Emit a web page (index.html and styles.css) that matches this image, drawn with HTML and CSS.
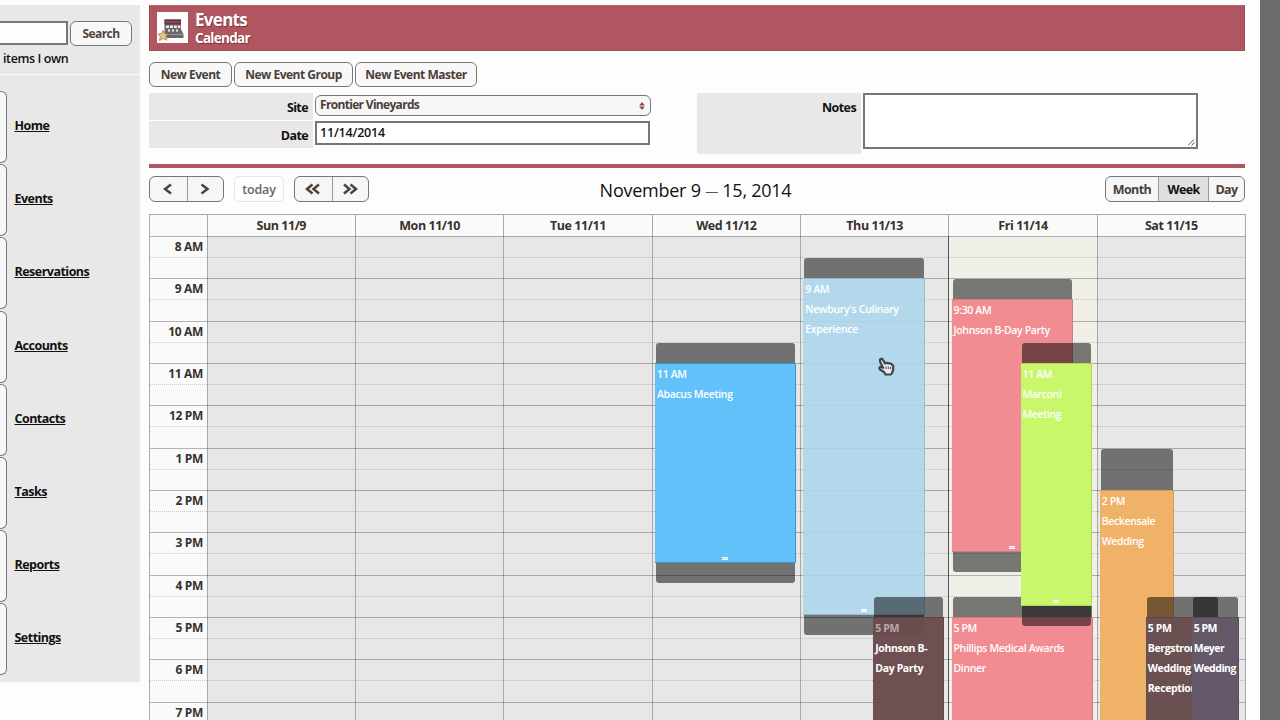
FILE: index.html
```html
<!DOCTYPE html>
<html lang="en">
<head>
    <meta charset="UTF-8">
    <meta name="viewport" content="width=device-width, initial-scale=1.0">
    <title>Events | Calendar</title>
    <link rel="stylesheet" href="styles.css">
</head>
<body>
    <div class="page">
        <!-- Sidebar -->
        <aside class="sidebar">
            <div class="search">
                <div class="search-row">
                    <input type="text" class="search-input" aria-label="Search">
                    <button class="btn search-btn">Search</button>
                </div>
                <div class="search-option">items I own</div>
            </div>
            <nav class="side-nav">
                <div class="nav-item"><span class="nav-icon"></span><a href="#">Home</a></div>
                <div class="nav-item"><span class="nav-icon"></span><a href="#">Events</a></div>
                <div class="nav-item"><span class="nav-icon"></span><a href="#">Reservations</a></div>
                <div class="nav-item"><span class="nav-icon"></span><a href="#">Accounts</a></div>
                <div class="nav-item"><span class="nav-icon"></span><a href="#">Contacts</a></div>
                <div class="nav-item"><span class="nav-icon"></span><a href="#">Tasks</a></div>
                <div class="nav-item"><span class="nav-icon"></span><a href="#">Reports</a></div>
                <div class="nav-item"><span class="nav-icon"></span><a href="#">Settings</a></div>
            </nav>
        </aside>

        <!-- Main Content -->
        <main>
            <header>
                <svg class="header-icon" viewBox="0 0 31 31">
                    <rect width="31" height="31" fill="#fffdfd"/>
                    <path d="M7.500 7.500h16.500v10l2.500 4.500v4H10l-2.500-4z" fill="#6b6668"/>
                    <path d="M7.500 7.500h16.500v5H7.500z" fill="#5d3a41"/>
                    <path d="M8 10h15.500" stroke="#a04453" stroke-width="1.500"/>
                    <path d="M9 13.500h3v2.500H9zM13 13.500h3V16h-3zM17 13.500h2.800V16H17zM20.800 13.500h2.500V16h-2.500zM11 17.500h2v2h-2zM15 17.500h2v2h-2zM19 17.500h2v2h-2z" fill="#f0eced"/>
                    <path d="M12 22.500h14" stroke="#9a9698" stroke-width="1"/>
                    <path d="M6 18.500l1.500 3.200 3.500.3-2.200 2.600 1 3.600-3.600-1.700-3.700 2 .8-4L1 22l3.500-.5z" fill="#e8c487" stroke="#8f7348" stroke-width=".7"/>
                </svg>
                <div class="header-text">
                    <h1>Events</h1>
                    <h2>Calendar</h2>
                </div>
            </header>

            <div class="actions">
                <button class="btn new-event">New Event</button>
                <button class="btn new-group">New Event Group</button>
                <button class="btn new-master">New Event Master</button>
            </div>

            <!-- Filters -->
            <div class="filters">
                <div class="filter-col">
                    <div class="field">
                        <label>Site</label>
                        <div class="select">
                            <span>Frontier Vineyards</span>
                            <svg width="6" height="8" viewBox="0 0 6 8"><path d="M3 0l2.800 3.400H.2zM3 8l2.800-3.400H.2z" fill="#8c4a45"/></svg>
                        </div>
                    </div>
                    <div class="field">
                        <label>Date</label>
                        <div class="date-input">11/14/2014</div>
                    </div>
                </div>
                <div class="field notes">
                    <label>Notes</label>
                    <div class="notes-input">
                        <svg width="7" height="7" viewBox="0 0 7 7"><path d="M0 6.500L6 .5M3.500 6.500l3-3" stroke="#555" stroke-width="1" fill="none"/></svg>
                    </div>
                </div>
            </div>

            <!-- Calendar toolbar -->
            <div class="toolbar">
                <div class="toolbar-left">
                    <div class="btn-group arrows">
                        <button><svg width="10" height="12" viewBox="0 0 10 12"><path d="M8 1.500L2 6l6 4.500"/></svg></button>
                        <button><svg width="10" height="12" viewBox="0 0 10 12"><path d="M1.500 1.500l6 4.500-6 4.500"/></svg></button>
                    </div>
                    <button class="today">today</button>
                    <div class="btn-group arrows">
                        <button><svg width="16" height="12" viewBox="0 0 16 12"><path d="M7.500 1.500L2 6l5.500 4.500M14 1.500L8.500 6l5.500 4.500"/></svg></button>
                        <button><svg width="16" height="12" viewBox="0 0 16 12"><path d="M2 1.500L7.500 6 2 10.500M8.500 1.500L14 6l-5.500 4.500"/></svg></button>
                    </div>
                </div>
                <div class="range">November 9 <span>—</span> 15, 2014</div>
                <div class="btn-group views">
                    <button class="month">Month</button>
                    <button class="week active">Week</button>
                    <button class="day-view">Day</button>
                </div>
            </div>

            <!-- Week view -->
            <div class="calendar">
                <div class="cal-head">
                    <div></div>
                    <div>Sun 11/9</div>
                    <div>Mon 11/10</div>
                    <div>Tue 11/11</div>
                    <div>Wed 11/12</div>
                    <div>Thu 11/13</div>
                    <div>Fri 11/14</div>
                    <div>Sat 11/15</div>
                </div>
                <div class="cal-body">
                    <div class="days">
                        <div class="axis"></div>
                        <div class="day"></div>
                        <div class="day"></div>
                        <div class="day"></div>
                        <div class="day"></div>
                        <div class="day"></div>
                        <div class="day current"></div>
                        <div class="day"></div>
                    </div>
                    <div class="hours">
                        <div class="hour"><span>8 AM</span></div>
                        <div class="hour"><span>9 AM</span></div>
                        <div class="hour"><span>10 AM</span></div>
                        <div class="hour"><span>11 AM</span></div>
                        <div class="hour"><span>12 PM</span></div>
                        <div class="hour"><span>1 PM</span></div>
                        <div class="hour"><span>2 PM</span></div>
                        <div class="hour"><span>3 PM</span></div>
                        <div class="hour"><span>4 PM</span></div>
                        <div class="hour"><span>5 PM</span></div>
                        <div class="hour"><span>6 PM</span></div>
                        <div class="hour"><span>7 PM</span></div>
                    </div>
                    <div class="events">
                        <div class="event-day wed">
                            <div class="event abacus">
                                <div class="buffer"></div>
                                <div class="event-body">11 AM<br>Abacus Meeting<i class="grip"></i></div>
                                <div class="buffer after"></div>
                            </div>
                        </div>
                        <div class="event-day thu">
                            <div class="event newbury">
                                <div class="buffer"></div>
                                <div class="event-body">9 AM<br>Newbury's Culinary<br>Experience<i class="grip"></i></div>
                                <div class="buffer after"></div>
                            </div>
                            <div class="event johnson-thu">
                                <div class="buffer"></div>
                                <div class="event-body"><span class="faded">5 PM</span><br>Johnson B-<br>Day Party</div>
                            </div>
                        </div>
                        <div class="event-day fri">
                            <div class="event johnson-fri">
                                <div class="buffer"></div>
                                <div class="event-body">9:30 AM<br>Johnson B-Day Party<i class="grip"></i></div>
                                <div class="buffer after"></div>
                            </div>
                            <div class="event phillips">
                                <div class="buffer"></div>
                                <div class="event-body">5 PM<br>Phillips Medical Awards<br>Dinner</div>
                            </div>
                            <div class="event marconi">
                                <div class="buffer"></div>
                                <div class="event-body">11 AM<br>Marconi<br>Meeting<i class="grip"></i></div>
                                <div class="buffer after"></div>
                            </div>
                        </div>
                        <div class="event-day sat">
                            <div class="event beckensale">
                                <div class="buffer"></div>
                                <div class="event-body">2 PM<br>Beckensale<br>Wedding</div>
                            </div>
                            <div class="event bergstrom">
                                <div class="buffer"></div>
                                <div class="event-body">5 PM<br>Bergstrom<br>Wedding<br>Reception</div>
                            </div>
                            <div class="event meyer">
                                <div class="buffer"></div>
                                <div class="event-body">5 PM<br>Meyer<br>Wedding</div>
                            </div>
                        </div>
                    </div>
                </div>
            </div>
        </main>
    </div>

    <!-- Hand cursor over the Thursday event -->
    <svg class="cursor" width="17" height="19" viewBox="0 0 17 19">
        <path d="M2 2.500c1.300-1.300 2.600-.5 3.200.7L7 6.500l1.500-.7 1.700.3 1.500.2 2 1 1.500 1.700v4L14 16l-1 1.500H7.500L6 15l-4-2.500c-1.500-1.500 0-3 1.600-2.300l1.500.6L2.200 5z" fill="#e8eaec" stroke="#404447" stroke-width="2.200" stroke-linejoin="round"/>
        <path d="M8 9.500v2.500M10.300 9.500v2.500M12.500 10v2.200" stroke="#5a5d60" stroke-width="1.200"/>
    </svg>
</body>
</html>
```
FILE: styles.css
```css
/* General Styles */
* {
    box-sizing: border-box;
}

body {
    margin: 0;
    width: 1280px;
    height: 720px;
    overflow: hidden;
    position: relative;
    background: #6b6b6b;
    font-family: 'Trebuchet MS', 'Open Sans', sans-serif;
    font-size: 13px;
    color: #111;
}

.page {
    display: flex;
    align-items: flex-start;
    gap: 9px;
    width: 1260px;
    height: 720px;
    padding-top: 5px;
    background: #fefdfe;
    overflow: hidden;
}

button {
    font-family: inherit;
    padding: 0;
    margin: 0;
}

.btn {
    height: 25px;
    border: 1px solid #77777a;
    border-radius: 6px;
    background: #f8f8f8;
    color: #4b4038;
    font-size: 12px;
    font-weight: 700;
    letter-spacing: -0.5px;
}

/* Sidebar */
.sidebar {
    width: 140px;
    height: 677px;
    background: #e8e8e8;
    flex: none;
}

.search {
    height: 70px;
    padding-top: 16px;
    border-bottom: 1px solid #fbfbfb;
}

.search-row {
    display: flex;
    gap: 2px;
}

.search-input {
    width: 68px;
    height: 24px;
    border: 2px solid #777;
    border-left: none;
    background: #fefefe;
}

.search-btn {
    width: 62px;
    color: #50453c;
    letter-spacing: -0.6px;
}

.search-option {
    padding-left: 3px;
    line-height: 17px;
    margin-top: 4px;
    font-size: 12.500px;
    font-weight: 600;
    letter-spacing: -0.4px;
}

.side-nav {
    padding-top: 16px;
    display: flex;
    flex-direction: column;
    gap: 1.2px;
}

.nav-item {
    display: flex;
    gap: 7.500px;
    height: 72px;
}

.nav-icon {
    width: 7px;
    height: 72px;
    border: 1px solid #777;
    border-left: none;
    border-radius: 0 6px 6px 0;
    background: #f8f8f8;
}

.nav-item a {
    margin-top: 26px;
    line-height: 17px;
    color: #111;
    font-weight: 700;
    font-size: 12.500px;
    letter-spacing: -0.52px;
    text-decoration: underline;
    text-underline-offset: 1px;
}

/* Page header */
main {
    width: 1097px;
    flex: none;
}

header {
    display: flex;
    gap: 7px;
    width: 1096px;
    height: 46px;
    padding: 6px 7px;
    background: #b05660;
    border: 1px solid #a34d57;
    border-top-color: #b9616b;
    color: #fff;
    text-shadow: 1px 1px 1px rgba(80, 20, 30, 0.5);
}

.header-icon {
    width: 31px;
    height: 31px;
}

h1, h2 {
    margin: 0;
    font-weight: 700;
}

h1 {
    margin-top: -3px;
    font-size: 17px;
    line-height: 21px;
    letter-spacing: -0.7px;
}

h2 {
    font-size: 13.500px;
    line-height: 17px;
    letter-spacing: -0.7px;
}

.actions {
    display: flex;
    gap: 2px;
    padding-top: 11px;
}

.new-event {
    width: 83px;
}

.new-group {
    width: 119px;
}

.new-master {
    width: 122px;
}

/* Filters */
.filters {
    display: flex;
    gap: 46px;
    height: 77px;
    padding-top: 6px;
    width: 1096px;
}

.filter-col {
    display: flex;
    flex-direction: column;
    gap: 1px;
    width: 502px;
}

.field {
    display: flex;
    gap: 2px;
}

.field label {
    width: 164px;
    height: 27px;
    padding: 6px 5px 0 0;
    background: #e8e8e8;
    text-align: right;
    line-height: 17px;
    font-weight: 700;
    font-size: 12.500px;
    letter-spacing: -0.6px;
}

.select {
    display: flex;
    justify-content: space-between;
    align-items: center;
    width: 336px;
    height: 21px;
    margin-top: 2px;
    padding: 0 5px 2px 4px;
    border: 1px solid #77777a;
    border-radius: 6px;
    background: #f7f7f7;
    color: #4b4038;
    font-size: 12px;
    font-weight: 700;
    letter-spacing: -0.68px;
}

.select svg {
    margin-top: 3px;
}

.date-input {
    width: 335px;
    height: 24px;
    padding-left: 3px;
    border: 2px solid #777;
    background: #fff;
    line-height: 20px;
    font-size: 12.500px;
    font-weight: 600;
    letter-spacing: -0.2px;
}

.field.notes label {
    height: 61px;
}

.notes-input {
    display: flex;
    justify-content: flex-end;
    align-items: flex-end;
    width: 335px;
    height: 56px;
    padding: 1px;
    border: 2px solid #777;
    background: #fff;
}

/* Calendar toolbar */
.toolbar {
    display: grid;
    grid-template-columns: 1fr auto 1fr;
    align-items: start;
    width: 1096px;
    height: 50px;
    padding-top: 8px;
    border-top: 4px solid #b05660;
}

.toolbar-left {
    display: flex;
    gap: 10px;
}

.btn-group {
    display: flex;
    height: 26px;
    border: 1px solid #77777a;
    border-radius: 6px;
    background: #f6f6f6;
    overflow: hidden;
}

.btn-group button {
    display: flex;
    align-items: center;
    justify-content: center;
    border: none;
    border-left: 1px solid #999;
    background: none;
    color: #4b4038;
    font-size: 12.500px;
    font-weight: 700;
    letter-spacing: -0.6px;
}

.btn-group button:first-child {
    border-left: none;
}

.arrows button {
    width: 36.500px;
}

.arrows svg {
    fill: none;
    stroke: #4f4237;
    stroke-width: 2.500;
}

.today {
    width: 50px;
    height: 26px;
    border: 1px solid #e6e6e6;
    border-radius: 5px;
    background: #fefefe;
    color: #666;
    font-size: 12.500px;
    font-weight: 600;
    letter-spacing: -0.2px;
}

.range {
    line-height: 28px;
    font-size: 18px;
    font-weight: 500;
    letter-spacing: -0.25px;
    white-space: nowrap;
    padding-right: 3px;
}

.range span {
    font-size: 13px;
    color: #555;
    vertical-align: 1px;
}

.views {
    justify-self: end;
}

.views .month {
    width: 52px;
}

.views .week {
    width: 50px;
}

.views .day-view {
    width: 36px;
}

.views .active {
    background: #dfdfdf;
    color: #111;
}

/* Week view */
.calendar {
    width: 1097px;
    border: 1px solid #a8a8a8;
    border-bottom: none;
}

.cal-head,
.days {
    display: grid;
    grid-template-columns: 56.600px repeat(7, 1fr);
}

.cal-head {
    height: 21px;
    background: #fafafa;
    color: #37322c;
    font-weight: 700;
    font-size: 12.500px;
    line-height: 21px;
    letter-spacing: -0.45px;
    text-align: center;
}

.cal-head div + div,
.day {
    border-left: 1px solid #a8a8a8;
}

.cal-body {
    display: grid;
    height: 509px;
    position: relative;
}

.days,
.hours,
.events {
    grid-area: 1 / 1;
}

.axis {
    background: #fafafa;
}

.day {
    background: #e7e7e7;
}

.day.current {
    background: #f1f0e8;
    border-left-color: #555;
}

.hour {
    height: 42.340px;
    border-top: 1px solid rgba(0, 0, 0, 0.28);
    color: #37322c;
    font-weight: 700;
    font-size: 12px;
    line-height: 19px;
    letter-spacing: -0.35px;
}

.hour span {
    display: block;
    width: 53px;
    height: 20px;
    text-align: right;
}

.hour::after {
    content: "";
    display: block;
    border-top: 1px dotted rgba(0, 0, 0, 0.2);
}

.events {
    display: grid;
    grid-template-columns: repeat(4, 1fr);
    margin-left: 502px;
}

.event-day {
    position: relative;
}

/* Events */
.event {
    position: absolute;
    display: flex;
    flex-direction: column;
    color: #fff;
    font-size: 10.500px;
    font-weight: 600;
    line-height: 20px;
    letter-spacing: -0.36px;
    white-space: nowrap;
}

.buffer {
    flex: none;
    height: 20px;
    margin: 0 1px;
    border-radius: 3px 3px 0 0;
    background: rgba(0, 0, 0, 0.51);
}

.buffer.after {
    border-radius: 0 0 3px 3px;
}

.event-body {
    flex: 1;
    position: relative;
    padding-left: 2px;
    border: 1px solid rgba(0, 0, 0, 0.12);
    border-width: 1px 1px 1px 0;
    overflow: hidden;
}

/* resize handle */
.grip {
    position: absolute;
    left: 50%;
    bottom: 2px;
    width: 6px;
    height: 3px;
    margin-left: -3px;
    border-top: 1px solid #fff;
    border-bottom: 1px solid #fff;
    background: rgba(255, 255, 255, 0.5);
}

.abacus {
    left: 3px;
    top: 107px;
    width: 141px;
    height: 240px;
}

.abacus .event-body {
    background: #62c1f9;
    border-color: #3d91c4;
}

.newbury {
    left: 3px;
    top: 22px;
    width: 122px;
    height: 377px;
}

.newbury .event-body {
    background: rgba(173, 214, 236, 0.9);
    letter-spacing: -0.3px;
}

.johnson-thu {
    left: 73px;
    top: 361px;
    width: 71px;
    height: 180px;
}

.johnson-thu .event-body {
    background: rgba(107, 77, 79, 0.98);
    font-weight: 700;
}

.faded {
    opacity: 0.5;
}

.johnson-fri {
    left: 3px;
    top: 43px;
    width: 121px;
    height: 293px;
}

.johnson-fri .event-body,
.phillips .event-body {
    background: #f18c93;
}

.phillips {
    left: 3px;
    top: 361px;
    width: 141px;
    height: 180px;
}

.marconi {
    left: 72px;
    top: 107px;
    width: 71px;
    height: 283px;
}

.marconi .event-body {
    background: #c8f76b;
}

.beckensale {
    left: 3px;
    top: 213px;
    width: 74px;
    height: 320px;
}

.beckensale .buffer {
    height: 41px;
}

.beckensale .event-body {
    background: #f0b268;
}

.bergstrom {
    left: 49px;
    top: 361px;
    width: 73px;
    height: 180px;
}

.bergstrom .event-body {
    width: 47px;
    background: #6b5052;
    font-weight: 700;
}

.meyer {
    left: 95px;
    top: 361px;
    width: 47px;
    height: 180px;
}

.meyer .event-body {
    background: #655969;
    font-weight: 700;
    letter-spacing: -0.5px;
}

/* Cursor */
.cursor {
    position: absolute;
    left: 878px;
    top: 357px;
}
```
